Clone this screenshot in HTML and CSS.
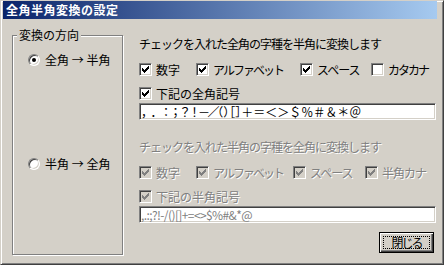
FILE: index.html
```html
<!DOCTYPE html>
<html lang="ja">
<head>
<meta charset="utf-8">
<title>全角半角変換の設定</title>
<link rel="stylesheet" href="styles.css">
</head>
<body>
<div class="window">
  <div class="titlebar">全角半角変換の設定</div>
  <div class="content">
    <fieldset class="group">
      <legend>変換の方向</legend>
      <div class="radio-row first"><span class="radio on"></span><span>全角 → 半角</span></div>
      <div class="radio-row second"><span class="radio"></span><span>半角 → 全角</span></div>
    </fieldset>
    <div class="right">
      <div class="heading">チェックを入れた全角の字種を半角に変換します</div>
      <div class="checks top">
        <div class="check"><span class="box"><svg width="11" height="11" viewBox="0 0 11 11"><path d="M2 4h1v3H2zM3 5h1v3H3zM4 6h1v3H4zM5 5h1v3H5zM6 4h1v3H6zM7 3h1v3H7zM8 2h1v3H8z"/></svg></span><span>数字</span></div>
        <div class="check"><span class="box"><svg width="11" height="11" viewBox="0 0 11 11"><path d="M2 4h1v3H2zM3 5h1v3H3zM4 6h1v3H4zM5 5h1v3H5zM6 4h1v3H6zM7 3h1v3H7zM8 2h1v3H8z"/></svg></span><span class="t2">アルファベット</span></div>
        <div class="check"><span class="box"><svg width="11" height="11" viewBox="0 0 11 11"><path d="M2 4h1v3H2zM3 5h1v3H3zM4 6h1v3H4zM5 5h1v3H5zM6 4h1v3H6zM7 3h1v3H7zM8 2h1v3H8z"/></svg></span><span class="t1">スペース</span></div>
        <div class="check"><span class="box"></span><span class="t2">カタカナ</span></div>
      </div>
      <div class="checks single">
        <div class="check"><span class="box"><svg width="11" height="11" viewBox="0 0 11 11"><path d="M2 4h1v3H2zM3 5h1v3H3zM4 6h1v3H4zM5 5h1v3H5zM6 4h1v3H6zM7 3h1v3H7zM8 2h1v3H8z"/></svg></span><span>下記の全角記号</span></div>
      </div>
      <div class="field full"><span class="sa"><span>，</span><span>．</span><span>：</span><span>；</span><span>？</span><span>！</span><span>－</span><span>／</span></span><span class="sb"><span>（</span><span>）</span><span>［</span><span>］</span></span><span class="sc"><span>＋</span><span>＝</span><span>＜</span><span>＞</span><span>＄</span><span>％</span><span>＃</span><span>＆</span><span>＊</span><span>＠</span></span></div>

      <div class="heading disabled second-heading">チェックを入れた半角の字種を全角に変換します</div>
      <div class="checks bottom disabled">
        <div class="check"><span class="box"><svg width="11" height="11" viewBox="0 0 11 11"><path d="M2 4h1v3H2zM3 5h1v3H3zM4 6h1v3H4zM5 5h1v3H5zM6 4h1v3H6zM7 3h1v3H7zM8 2h1v3H8z"/></svg></span><span>数字</span></div>
        <div class="check"><span class="box"><svg width="11" height="11" viewBox="0 0 11 11"><path d="M2 4h1v3H2zM3 5h1v3H3zM4 6h1v3H4zM5 5h1v3H5zM6 4h1v3H6zM7 3h1v3H7zM8 2h1v3H8z"/></svg></span><span class="t2">アルファベット</span></div>
        <div class="check"><span class="box"><svg width="11" height="11" viewBox="0 0 11 11"><path d="M2 4h1v3H2zM3 5h1v3H3zM4 6h1v3H4zM5 5h1v3H5zM6 4h1v3H6zM7 3h1v3H7zM8 2h1v3H8z"/></svg></span><span class="t1">スペース</span></div>
        <div class="check"><span class="box"><svg width="11" height="11" viewBox="0 0 11 11"><path d="M2 4h1v3H2zM3 5h1v3H3zM4 6h1v3H4zM5 5h1v3H5zM6 4h1v3H6zM7 3h1v3H7zM8 2h1v3H8z"/></svg></span><span class="t1">半角カナ</span></div>
      </div>
      <div class="checks single single-bottom disabled">
        <div class="check"><span class="box"><svg width="11" height="11" viewBox="0 0 11 11"><path d="M2 4h1v3H2zM3 5h1v3H3zM4 6h1v3H4zM5 5h1v3H5zM6 4h1v3H6zM7 3h1v3H7zM8 2h1v3H8z"/></svg></span><span>下記の半角記号</span></div>
      </div>
      <div class="field half">,.:;?!-/()[]+=&lt;&gt;$%#&amp;*@</div>

      <div class="btn-row"><button type="button" class="btn">閉じる</button></div>
    </div>
  </div>
</div>
</body>
</html>
```

FILE: styles.css
```css
* { box-sizing: border-box; }
html, body { margin: 0; padding: 0; }
body {
  width: 444px;
  height: 265px;
  background: #d4d0c8;
  font-family: "Noto Sans CJK JP", "Noto Sans", sans-serif;
  font-size: 12px;
  color: #000;
  text-spacing-trim: space-all;
}
.window {
  width: 444px;
  height: 265px;
  display: flex;
  flex-direction: column;
  background: #d4d0c8;
  border: 1px solid;
  border-color: #d4d0c8 #404040 #404040 #d4d0c8;
  box-shadow: inset 1px 1px #fff, inset -1px -1px #808080;
  padding: 0 6px 2px 2px;
}
.titlebar {
  flex: none;
  height: 18px;
  line-height: 18px;
  padding-left: 3px;
  background: linear-gradient(to right, #0a246a, #a6caf0);
  color: #fff;
  font-weight: bold;
  font-size: 12px;
  letter-spacing: 0.5px;
  white-space: nowrap;
}
.content {
  flex: 1;
  display: grid;
  grid-template-columns: 111px 1fr;
  column-gap: 16px;
  padding: 9px 1px 7px 9px;
}
.group {
  margin: 0;
  padding: 0;
  min-width: 0;
  border: 1px solid #808080;
  box-shadow: inset 1px 1px #fff, 1px 1px #fff;
}
.group legend {
  margin-left: 4px;
  padding: 0 2px;
  line-height: 14px;
  background: #d4d0c8;
  white-space: nowrap;
}
.radio-row {
  display: flex;
  align-items: center;
  gap: 5px;
  height: 14px;
  line-height: 14px;
  padding-left: 15px;
  white-space: nowrap;
}
.radio-row.first { margin-top: 11px; }
.radio-row.second { margin-top: 90px; }
.radio {
  position: relative;
  flex: none;
  width: 12px;
  height: 12px;
  border-radius: 50%;
  border: 1px solid;
  border-color: #808080 #fff #fff #808080;
  background: #fff;
  box-shadow: inset 1px 1px #404040, inset -1px -1px #d4d0c8;
}
.radio.on::after {
  content: "";
  position: absolute;
  left: 3px;
  top: 3px;
  width: 4px;
  height: 4px;
  border-radius: 50%;
  background: #000;
}
.right {
  display: flex;
  flex-direction: column;
  min-width: 0;
}
.heading {
  margin-top: 9px;
  line-height: 14px;
  letter-spacing: -1px;
  white-space: nowrap;
}
.heading.second-heading { margin-top: 20px; }
.checks {
  display: grid;
  height: 13px;
  margin-top: 12px;
  align-items: center;
}
.checks.top { grid-template-columns: 57px 104px 71px auto; }
.checks.bottom { grid-template-columns: 57px 97px 72px auto; }
.checks.single { margin-top: 11px; grid-template-columns: auto; }
.checks.single-bottom { margin-top: 11px; }
.check {
  display: flex;
  align-items: center;
  gap: 4px;
  height: 13px;
  line-height: 13px;
  white-space: nowrap;
}
.box {
  flex: none;
  display: block;
  width: 13px;
  height: 13px;
  border: 1px solid;
  border-color: #808080 #fff #fff #808080;
  background: #fff;
  box-shadow: inset 1px 1px #404040, inset -1px -1px #d4d0c8;
}
.box svg { display: block; fill: #000; shape-rendering: crispEdges; }
.t1 { letter-spacing: -1px; }
.t2 { letter-spacing: -2px; }
.disabled { color: #808080; text-shadow: 1px 1px 0 #fff; }
.disabled .box { background: #d4d0c8; }
.disabled .box svg { fill: #808080; }
.field {
  height: 17px;
  margin-top: 3px;
  padding: 0 2px 0 1px;
  line-height: 15px;
  border: 1px solid;
  border-color: #808080 #fff #fff #808080;
  background: #fff;
  box-shadow: inset 1px 1px #404040, inset -1px -1px #d4d0c8;
  white-space: nowrap;
  overflow: hidden;
}
.field.full .sa { letter-spacing: -2.5px; }
.field.full .sb { font-feature-settings: "halt"; }
.field.half { color: #808080; letter-spacing: -0.6px; }
.btn-row {
  display: flex;
  justify-content: flex-end;
  margin-top: 9px;
  padding-right: 2px;
}
.btn {
  position: relative;
  width: 55px;
  height: 21px;
  margin: 0;
  padding: 0;
  border: 1px solid #000;
  background: #d4d0c8;
  box-shadow: inset 1px 1px #fff, inset -1px -1px #404040, inset -2px -2px #808080;
  font: inherit;
  color: #000;
  letter-spacing: -2px;
  line-height: 17px;
  text-align: center;
}
.btn::after {
  content: "";
  position: absolute;
  inset: 3px;
  border: 1px dotted #000;
}
```
